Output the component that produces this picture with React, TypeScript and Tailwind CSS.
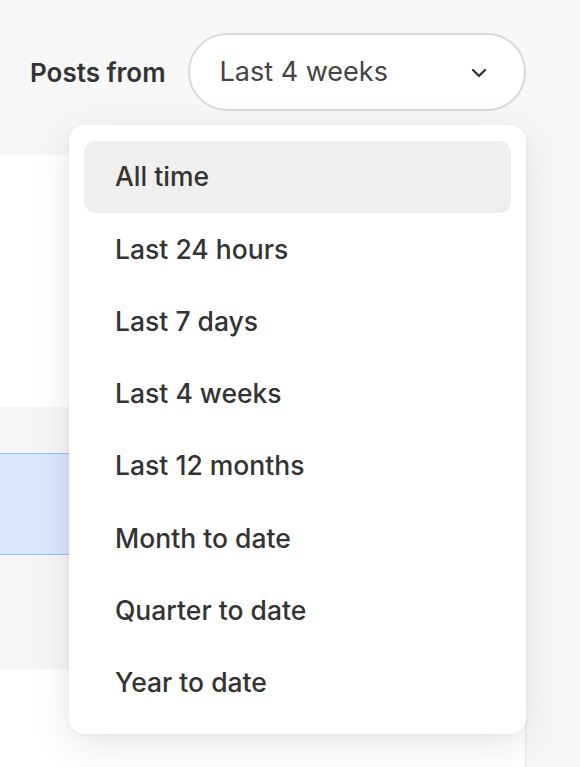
import React from "react";

const options = [
  "All time",
  "Last 24 hours",
  "Last 7 days",
  "Last 4 weeks",
  "Last 12 months",
  "Month to date",
  "Quarter to date",
  "Year to date",
];

const App = () => {
  return (
    <div
      className="relative h-[767px] w-[580px] overflow-hidden bg-[#f7f7f7]"
      style={{ fontFamily: "Inter, 'Noto Sans', sans-serif" }}
    >
      {/* header */}
      <div className="flex items-center gap-[22px] pl-[30px] pt-[33px]">
        <span className="text-[26px] font-semibold text-[#333333]">Posts from</span>
        <button className="flex h-[78px] w-[338px] items-center justify-between rounded-full border-2 border-[#d9d9d9] bg-white pl-[30px] pr-[33px] pt-[1px]">
          <span className="text-[27px] text-[#444444]">Last 4 weeks</span>
          <svg width="24" height="24" viewBox="0 0 24 24" fill="none" stroke="#333" strokeWidth="2.3" strokeLinecap="round" strokeLinejoin="round">
            <polyline points="6 9 12 15 18 9" />
          </svg>
        </button>
      </div>

      {/* panel behind the menu */}
      <div className="mt-[44px] flex w-[526px] flex-col border-r border-[#e6e6e6]">
        <div className="h-[252px] bg-white shadow-[0_2px_4px_rgba(0,0,0,0.06)]"></div>
        <div className="h-[46px] bg-[#f6f6f6]"></div>
        <div className="h-[102px] border-y border-[#93bdf4] bg-[#dae7fc]"></div>
        <div className="h-[115px] bg-[#f6f6f6]"></div>
        <div className="h-[200px] bg-white"></div>
      </div>

      {/* dropdown */}
      <div className="absolute left-[69px] top-[125px] flex w-[457px] flex-col rounded-[16px] bg-white px-[15px] pb-[15px] pt-[16px] shadow-[0_10px_40px_rgba(0,0,0,0.10),0_2px_6px_rgba(0,0,0,0.04)]">
        {options.map((o, i) => (
          <div
            key={o}
            className={`flex h-[72.3px] items-center rounded-[12px] pl-[31px] text-[26.5px] font-medium text-[#333333] ${
              i === 0 ? "bg-[#efefef]" : ""
            }`}
          >
            {o}
          </div>
        ))}
      </div>
    </div>
  );
};

export default App;
